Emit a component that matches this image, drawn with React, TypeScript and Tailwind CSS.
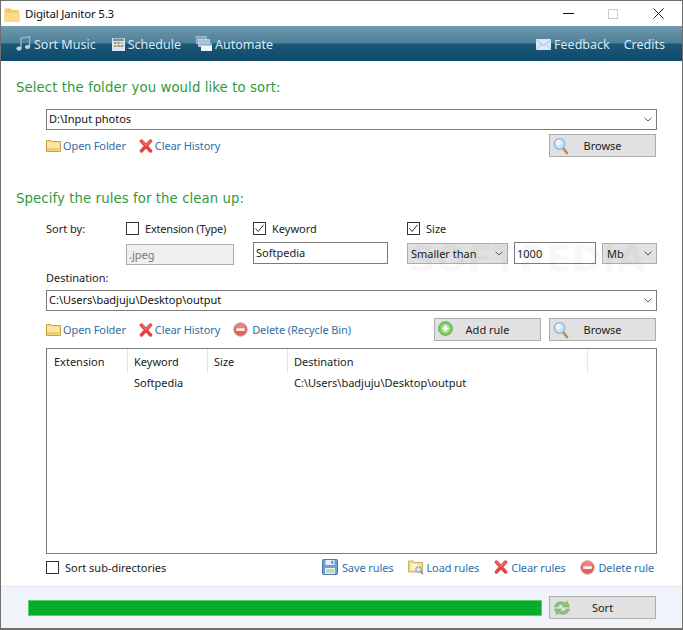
import React from 'react';

const FolderIcon = () => (
  <svg width="15" height="13" viewBox="0 0 15 13" className="shrink-0">
    <path d="M0.5 2.5 L0.5 1.5 L5 1.5 L6 2.5 L14.5 2.5 L14.5 12.5 L0.5 12.5 Z" fill="#f3d98a" stroke="#c9a23f" />
    <rect x="1.5" y="4" width="12" height="7.5" fill="#f8e7a8" />
    <rect x="1.5" y="9" width="12" height="2.5" fill="#eec965" />
  </svg>
);

const XIcon = () => (
  <svg width="14" height="14" viewBox="0 0 14 14" className="shrink-0">
    <path d="M2.4 2 L11.6 12 M11.6 2 L2.4 12" stroke="#e4443f" strokeWidth="3.4" strokeLinecap="round" />
    <path d="M2.6 2 L7 6.6 M11.4 2 L7 6.6" stroke="#f58f88" strokeWidth="1" strokeLinecap="round" />
  </svg>
);

const DeleteIcon = () => (
  <svg width="15" height="15" viewBox="0 0 15 15" className="shrink-0">
    <circle cx="7.5" cy="7.5" r="6.8" fill="#e4625c" stroke="#c9b0a8" />
    <circle cx="7.5" cy="5" r="4.5" fill="#f1a29c" opacity="0.5" />
    <rect x="3.2" y="6.2" width="8.6" height="2.8" rx="0.5" fill="#fbeeee" />
  </svg>
);

const SearchIcon = () => (
  <svg width="16" height="18" viewBox="0 0 16 18" className="shrink-0">
    <path d="M10 11 L14 16" stroke="#c08a50" strokeWidth="2.6" strokeLinecap="round" />
    <circle cx="6.5" cy="7" r="5.3" fill="#cfe4f6" stroke="#8fb2d2" strokeWidth="1.2" />
    <circle cx="5.5" cy="5.5" r="2.5" fill="#eef7fd" />
  </svg>
);

const PlusIcon = () => (
  <svg width="15" height="15" viewBox="0 0 15 15" className="shrink-0">
    <circle cx="7.5" cy="7.5" r="6.8" fill="#7ccb63" stroke="#5aa947" />
    <circle cx="7.5" cy="7.5" r="4.4" fill="#a6e08e" />
    <path d="M7.5 4.5 V10.5 M4.5 7.5 H10.5" stroke="#ffffff" strokeWidth="2.2" />
  </svg>
);

const SaveIcon = () => (
  <svg width="16" height="16" viewBox="0 0 16 16" className="shrink-0">
    <rect x="0.5" y="0.5" width="15" height="15" rx="1" fill="#6f9fd4" stroke="#4a78ad" />
    <rect x="3.5" y="1" width="9" height="5" fill="#e6eef7" />
    <rect x="9.5" y="1.8" width="1.6" height="3" fill="#4a78ad" />
    <rect x="3" y="9" width="10" height="6" fill="#eef5ea" />
    <path d="M4 11 H12 M4 13 H12" stroke="#8cbf7e" strokeWidth="1" />
  </svg>
);

const LoadIcon = () => (
  <svg width="16" height="15" viewBox="0 0 16 15" className="shrink-0">
    <path d="M0.5 1 L5.5 1 L6.5 2.5 L14.5 2.5 L14.5 12 L0.5 12 Z" fill="#f4dd94" stroke="#cfae55" />
    <rect x="3" y="4" width="8" height="6" fill="#fbf3cf" />
    <circle cx="10.5" cy="9.5" r="2.8" fill="#d6e6f2" stroke="#8299ad" />
    <path d="M12.6 11.6 L15 14" stroke="#7d8c99" strokeWidth="1.6" />
  </svg>
);

const SyncIcon = () => (
  <svg width="18" height="18" viewBox="0 0 18 18" className="shrink-0">
    <path d="M1.5 8 C2 3.5 8 1 12.5 4 L14 2 L16.5 8 L9.5 8 L11 6.2 C8.5 4.8 5.5 5.6 4.8 8 Z" fill="#8cc278" stroke="#6fa95a" strokeWidth="0.5" />
    <path d="M16.5 10 C16 14.5 10 17 5.5 14 L4 16 L1.5 10 L8.5 10 L7 11.8 C9.5 13.2 12.5 12.4 13.2 10 Z" fill="#8cc278" stroke="#6fa95a" strokeWidth="0.5" />
  </svg>
);

const NoteIcon = () => (
  <svg width="15" height="16" viewBox="0 0 15 16" className="shrink-0">
    <path d="M5 12 V2 L13.5 0.8 V10.5" fill="none" stroke="#9fb2bd" strokeWidth="1.4" />
    <ellipse cx="3" cy="12.6" rx="2.6" ry="2.1" fill="#c9d2d6" />
    <ellipse cx="11.5" cy="11" rx="2.6" ry="2.1" fill="#c9d2d6" />
  </svg>
);

const CalendarIcon = () => (
  <svg width="13" height="13" viewBox="0 0 13 13" className="shrink-0">
    <rect x="0" y="0" width="13" height="13" fill="#dbe7f0" />
    <rect x="1" y="0.5" width="11" height="2.5" fill="#6e94b8" />
    <rect x="2" y="4" width="2.5" height="2" fill="#e27a5f" />
    <rect x="5.3" y="4" width="2.5" height="2" fill="#7fb46a" />
    <rect x="8.6" y="4" width="2.5" height="2" fill="#e2b55f" />
    <rect x="2" y="7" width="2.5" height="2" fill="#7fb46a" />
    <rect x="5.3" y="7" width="2.5" height="2" fill="#e27a5f" />
    <rect x="8.6" y="7" width="2.5" height="2" fill="#6e94b8" />
  </svg>
);

const WindowsIcon = () => (
  <svg width="16" height="16" viewBox="0 0 16 16" className="shrink-0">
    <rect x="0.5" y="0.5" width="10" height="7" fill="#7fa5c7" stroke="#b6cbdc" strokeWidth="0.7" />
    <rect x="2.5" y="3.5" width="11" height="7" fill="#a8c2d8" stroke="#d3e0ea" strokeWidth="0.7" />
    <rect x="5" y="7.5" width="11" height="7.5" fill="#f0f5f8" />
    <rect x="5" y="7.5" width="11" height="2" fill="#86a9c6" />
  </svg>
);

const MailIcon = () => (
  <svg width="15" height="11" viewBox="0 0 15 11" className="shrink-0">
    <rect width="15" height="11" fill="#dbe9f6" />
    <path d="M0 0.5 L7.5 6.5 L15 0.5 M0 10.5 L5.5 5 M15 10.5 L9.5 5" fill="none" stroke="#a7c1da" strokeWidth="1" />
  </svg>
);

const Chevron = () => (
  <svg width="8" height="5" viewBox="0 0 8 5" className="shrink-0">
    <path d="M0.5 0.7 L4 4 L7.5 0.7" fill="none" stroke="#555555" strokeWidth="1" />
  </svg>
);

const CheckBox = ({ checked }: { checked?: boolean }) => (
  <div className="w-[13px] h-[13px] border border-[#333333] bg-white flex items-center justify-center shrink-0">
    {checked && (
      <svg width="11" height="11" viewBox="0 0 11 11">
        <path d="M1.5 5.5 L4.2 8.5 L9.5 1.8" fill="none" stroke="#333333" strokeWidth="1" />
      </svg>
    )}
  </div>
);

const LinkItem = ({ icon, label, className }: { icon: React.ReactNode; label: string; className?: string }) => (
  <div className={`flex items-center text-[#2f6ea6] tracking-[-0.1px] ${className || 'gap-[2px]'}`}>
    {icon}
    <span>{label}</span>
  </div>
);

const Button = ({ icon, label }: { icon: React.ReactNode; label: string }) => (
  <div className="relative w-[107px] h-[23px] bg-[#e1e1e1] border border-[#adadad] flex items-center justify-center text-[#222222]">
    <div className="absolute left-[3px] top-[2px]">{icon}</div>
    <span>{label}</span>
  </div>
);

const ComboBox = ({ value }: { value: string }) => (
  <div className="h-[21px] bg-white border border-[#7a7a7a] flex items-center justify-between pl-[2px] pr-[4px] text-[#111111]">
    <span className="-mt-[2px]">{value}</span>
    <Chevron />
  </div>
);

const SectionTitle = ({ children }: { children: React.ReactNode }) => (
  <h2 className="text-[13.25px] leading-[18px] text-[#2e9a3c] tracking-[0.1px] font-['DejaVu_Sans',sans-serif]">{children}</h2>
);

const columns = [
  { name: 'Extension', width: 'w-[81px] pl-[7px]' },
  { name: 'Keyword', width: 'w-[80px] pl-[6px]' },
  { name: 'Size', width: 'w-[80px] pl-[6px]' },
  { name: 'Destination', width: 'w-[300px] pl-[6px]' },
];

export default function App() {
  return (
    <div className="relative w-[683px] h-[630px] flex flex-col bg-white border border-[#6f6f6f] border-b-2 text-[11px] leading-[15px] font-['Noto_Sans','Open_Sans',sans-serif] overflow-hidden">
      {/* title bar */}
      <div className="h-[25px] shrink-0 flex items-center text-[11.5px] text-[#111111] tracking-[-0.2px]">
        <svg width="16" height="16" viewBox="0 0 16 16" className="ml-[3px] mr-[5px] mt-[3px]">
          <path d="M0.5 3 L1.5 1.5 L7 1.5 L8 3 L15 3 L15.5 15 L0.5 15 Z" fill="#f5c868" />
          <rect x="0.5" y="5.5" width="15" height="9.5" rx="1" fill="#fbdb8b" />
        </svg>
        <span>Digital Janitor 5.3</span>
        <div className="ml-auto flex items-center text-[#222222]">
          <div className="w-[44px] flex justify-center">
            <div className="w-[11px] h-px bg-[#111111]" />
          </div>
          <div className="w-[45px] flex justify-center">
            <div className="w-[10px] h-[10px] border border-[#c8c8c8]" />
          </div>
          <div className="w-[46px] flex justify-center mr-px">
            <svg width="11" height="11" viewBox="0 0 11 11">
              <path d="M0.5 0.5 L10.5 10.5 M10.5 0.5 L0.5 10.5" stroke="#222222" strokeWidth="1" />
            </svg>
          </div>
        </div>
      </div>

      {/* nav */}
      <nav className="h-[35px] shrink-0 flex items-center pl-[15px] pr-[17px] pt-[1px] text-[12.5px] text-[#dbe9f2] bg-[linear-gradient(to_bottom,#6f99ad_0%,#4f7f99_48%,#1a5878_52%,#0e4a6b_100%)]">
        <div className="flex items-center gap-[3px]"><NoteIcon /><span>Sort Music</span></div>
        <div className="flex items-center gap-[3px] ml-[16px]"><CalendarIcon /><span>Schedule</span></div>
        <div className="flex items-center gap-[3px] ml-[15px]"><WindowsIcon /><span>Automate</span></div>
        <div className="flex items-center gap-[3px] ml-auto"><MailIcon /><span>Feedback</span></div>
        <span className="ml-[14px]">Credits</span>
      </nav>

      {/* main */}
      <main className="flex-1 flex flex-col pl-[15px] pr-[25px] pt-[18px]">
        <SectionTitle>Select the folder you would like to sort:</SectionTitle>
        <div className="pl-[30px] mt-[12px]">
          <ComboBox value="D:\Input photos" />
          <div className="flex items-center justify-between mt-[4px] pr-px">
            <div className="flex items-center gap-[13px]">
              <LinkItem icon={<FolderIcon />} label="Open Folder" />
              <LinkItem icon={<XIcon />} label="Clear History" />
            </div>
            <Button icon={<SearchIcon />} label="Browse" />
          </div>
        </div>

        <div className="mt-[33px]">
          <SectionTitle>Specify the rules for the clean up:</SectionTitle>
        </div>
        <div className="pl-[30px] mt-[12px] text-[#222222]">
          <div className="grid grid-cols-[80px_127px_154px_1fr] h-[17px] items-center">
            <span className="-mt-[1px]">Sort by:</span>
            <div className="flex items-center gap-[6px]"><CheckBox /><span className="tracking-[-0.2px]">Extension (Type)</span></div>
            <div className="flex items-center gap-[6px]"><CheckBox checked /><span className="-mt-[1px]">Keyword</span></div>
            <div className="flex items-center gap-[6px]"><CheckBox checked /><span className="-mt-[1px]">Size</span></div>
          </div>
          <div className="grid grid-cols-[80px_127px_154px_107px_88px_1fr] items-center h-[24px] mt-[4px]">
            <div />
            <div className="w-[108px] h-[21px] mt-[2px] bg-[#efefef] border border-[#adadad] pl-[2px] flex items-center text-[#777777]">.jpeg</div>
            <div className="w-[135px] h-[22px] -mt-[1px] bg-white border border-[#7a7a7a] pl-[2px] flex items-center">Softpedia</div>
            <div className="w-[101px] h-[21px] bg-[#e1e1e1] border border-[#adadad] flex items-center justify-between pl-[3px] pr-[4px]">
              <span>Smaller than</span><Chevron />
            </div>
            <div className="w-[82px] h-[22px] bg-white border border-[#7a7a7a] pl-[2px] flex items-center">1000</div>
            <div className="h-[21px] bg-[#e1e1e1] border border-[#adadad] flex items-center justify-between pl-[4px] pr-[4px]">
              <span>Mb</span><Chevron />
            </div>
          </div>
          <div className="mt-[5px]">Destination:</div>
          <div className="mt-[5px]"><ComboBox value="C:\Users\badjuju\Desktop\output" /></div>
          <div className="flex items-center justify-between mt-[7px] pr-px">
            <div className="flex items-center gap-[13px]">
              <LinkItem icon={<FolderIcon />} label="Open Folder" />
              <LinkItem icon={<XIcon />} label="Clear History" />
              <LinkItem icon={<DeleteIcon />} label="Delete (Recycle Bin)" className="gap-[4px]" />
            </div>
            <div className="flex gap-[8px]">
              <Button icon={<PlusIcon />} label="Add rule" />
              <Button icon={<SearchIcon />} label="Browse" />
            </div>
          </div>

          {/* rules table */}
          <div className="h-[206px] mt-[7px] bg-white border border-[#7a7a7a]">
            <div className="flex h-[25px]">
              {columns.map((col) => (
                <div key={col.name} className={`${col.width} h-[24px] flex items-center border-r border-[#e5e5e5]`}>{col.name}</div>
              ))}
            </div>
            <div className="flex h-[17px] items-center">
              <div className="w-[81px]" />
              <div className="w-[80px] pl-[6px]">Softpedia</div>
              <div className="w-[80px]" />
              <div className="pl-[6px]">{'C:\\Users\\badjuju\\Desktop\\output'}</div>
            </div>
          </div>

          <div className="flex items-center justify-between h-[16px] mt-[5px]">
            <div className="flex items-center gap-[6px]"><CheckBox /><span>Sort sub-directories</span></div>
            <div className="flex items-center gap-[15px] pr-[3px]">
              <LinkItem icon={<SaveIcon />} label="Save rules" className="gap-[4px]" />
              <LinkItem icon={<LoadIcon />} label="Load rules" className="gap-[2px]" />
              <LinkItem icon={<XIcon />} label="Clear rules" className="gap-[3px]" />
              <LinkItem icon={<DeleteIcon />} label="Delete rule" className="gap-[3px]" />
            </div>
          </div>
        </div>
      </main>

      {/* footer */}
      <footer className="h-[42px] shrink-0 bg-[#f0f3f9] border-t border-[#e4e7ec] flex items-center pl-[27px] pr-[26px] justify-between">
        <div className="w-[514px] h-[16px] bg-[#07ac2b] border border-[#5fcf75]" />
        <Button icon={<SyncIcon />} label="Sort" />
      </footer>

      {/* watermark */}
      <div className="absolute left-[408px] top-[238px] text-[36px] leading-[40px] tracking-[1px] font-['DejaVu_Sans',sans-serif] font-bold text-[#000000] opacity-[0.025] pointer-events-none">SOFTPEDIA</div>
    </div>
  );
}
